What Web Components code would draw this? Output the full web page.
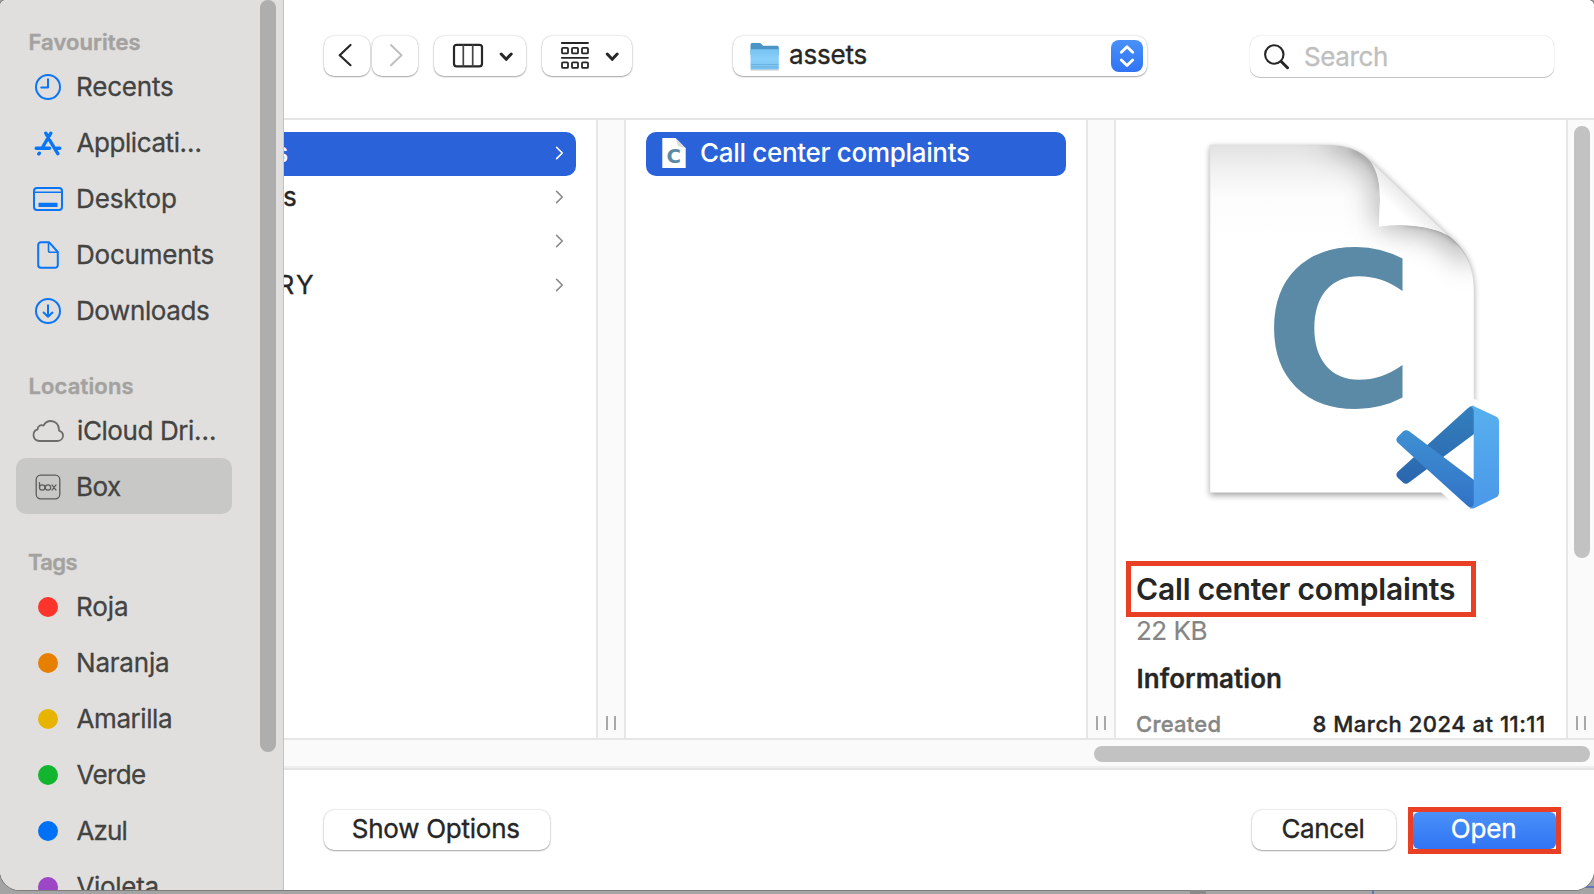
<!DOCTYPE html>
<html lang="en">
<head>
<meta charset="utf-8">
<title>Open</title>
<style>
html,body{margin:0;height:894px;overflow:hidden;font-family:Inter,"Liberation Sans",sans-serif}
body{background:linear-gradient(#6078b8,#6078b8) right 0 bottom 6px/14px 2px no-repeat,#a4a4a4}
</style>
</head>
<body>
<open-dialog></open-dialog>
<script>
const make = (el, css, html) => {
  el.attachShadow({mode:'open'}).innerHTML = `<style>${css}</style>${html}`;
};

/* A run of text whose drawn width is given by the attribute "w". */
const ctx = document.createElement('canvas').getContext('2d');
customElements.define('fit-text', class extends HTMLElement {
  connectedCallback() {
    if (!this.shadowRoot) make(this, ':host{display:inline-block;white-space:pre;flex:none}', '<slot></slot>');
    const s = getComputedStyle(this), t = this.textContent, w = +this.getAttribute('w');
    ctx.font = `${s.fontWeight} ${s.fontSize} ${s.fontFamily}`;
    const m = ctx.measureText(t);
    const ink = m.actualBoundingBoxLeft + m.actualBoundingBoxRight;
    const ls = w && t.length > 1 ? (w - ink) / (t.length - 1) : 0;
    this.style.letterSpacing = ls + 'px';
    this.style.marginLeft = m.actualBoundingBoxLeft - (/^[ATV]/.test(t) ? 1.5 : 0) + 'px';
    this.style.marginRight = (m.actualBoundingBoxRight - m.width - ls) + 'px';
  }
});

customElements.define('side-heading', class extends HTMLElement {
  constructor() {
    super();
    make(this, `:host{display:flex;align-items:flex-end;height:64px;padding-left:29.5px;box-sizing:border-box;
      font:600 22px/27px Inter,sans-serif;color:#a3a2a0;padding-bottom:2px;-webkit-text-stroke:.4px}
      :host([first]){height:58px}`, '<slot></slot>');
  }
});

customElements.define('side-item', class extends HTMLElement {
  constructor() {
    super();
    make(this, `:host{display:flex;align-items:center;height:56px;margin:0 0 0 16px;width:216px;border-radius:10px;
      font:400 26px/32px Inter,sans-serif;color:#434342;-webkit-text-stroke:.3px #434342}
      :host([selected]){background:#c8c8c6}
      .i{width:62px;flex:none;height:34px;display:flex;align-items:center;justify-content:center;padding:2px 0 0 1.500px;box-sizing:border-box}
      .t{padding-top:2px;display:flex}
      .i ::slotted(svg){display:block;flex:none}`,
      '<div class="i"><slot name="icon"></slot></div><div class="t"><slot></slot></div>');
  }
});

customElements.define('tag-dot', class extends HTMLElement {
  constructor() {
    super();
    make(this, ':host{display:block;width:20px;height:20px;border-radius:50%;flex:none}', '');
  }
  connectedCallback() { this.style.background = this.getAttribute('color'); }
});

customElements.define('push-button', class extends HTMLElement {
  constructor() {
    super();
    make(this, `:host{display:flex;align-items:center;height:40px;box-sizing:border-box;border-radius:10px;background:#fff;flex:none;
      box-shadow:0 0 2px rgba(0,0,0,.24),0 1px 1.5px rgba(0,0,0,.3);font:400 26px/32px Inter,sans-serif;color:#262626;-webkit-text-stroke:.35px}
      ::slotted(svg){display:block;flex:none}`, '<slot></slot>');
  }
});

customElements.define('scroll-thumb', class extends HTMLElement {
  constructor() {
    super();
    make(this, ':host{display:block;border-radius:8px;background:#c2c2c2;flex:none}', '');
  }
});

customElements.define('column-divider', class extends HTMLElement {
  constructor() {
    super();
    make(this, `:host{display:flex;box-sizing:border-box;width:30px;flex:none;border:solid #e6e6e6;border-width:0 2px;background:#fafafa;
      align-items:flex-end;justify-content:flex-start;padding-bottom:8px}
      :host([edge]){width:28px;border-right:0;flex-direction:column;justify-content:space-between;align-items:flex-start;padding-top:6px}
      i{width:2px;height:14px;background:#a8a8a8;display:block}
      .g{display:flex;gap:6px;padding-left:8px}
      ::slotted(scroll-thumb){width:16px;height:432px;margin-left:6px}`,
      '<slot></slot><div class="g"><i></i><i></i></div>');
  }
});

customElements.define('file-row', class extends HTMLElement {
  constructor() {
    super();
    make(this, `:host{display:flex;align-items:center;height:44px;box-sizing:border-box;font:400 26px/32px Inter,sans-serif;color:#262626;-webkit-text-stroke:.35px}
      :host([selected]){background:#2962d9;color:#fff}
      .a{margin-left:auto;margin-right:12px;stroke:#8a8a8a;display:none;margin-bottom:2px}
      :host([folder]) .a{display:block}
      :host([selected]) .a{stroke:#fff}
      .l{display:flex;align-items:center;padding-bottom:3px}`,
      `<div class="l"><slot></slot></div><svg class="a" width="9" height="14" viewBox="0 0 9 14" fill="none" stroke-width="1.6" stroke-linecap="round" stroke-linejoin="round"><path d="M1.6 1.4 7.300 7l-5.700 5.600"/></svg>`);
  }
});

customElements.define('mark-box', class extends HTMLElement {
  constructor() {
    super();
    make(this, ':host{display:flex;align-items:center;box-sizing:border-box;border:5px solid #e94025;flex:none}', '<slot></slot>');
  }
});

customElements.define('file-preview', class extends HTMLElement {
  constructor() {
    super();
    make(this, `:host{display:flex;flex-direction:column;width:450px;height:618px;overflow:hidden;background:#fff;flex:none;color:#262626}
      svg{display:block;flex:none}
      mark-box{margin-left:10px;width:350px;height:56px;padding:0 0 0 6px;font:600 30px/36px Inter,sans-serif}
      .size{font:400 26px/32px Inter,sans-serif;color:#858585;margin:-2.5px 0 0 21px;-webkit-text-stroke:.2px}
      .info{font:600 26px/32px Inter,sans-serif;margin:16.5px 0 0 21.5px;-webkit-text-stroke:.3px}
      .row{display:flex;justify-content:space-between;font:500 22px/28px Inter,sans-serif;margin:15px 22px 0 21px;-webkit-text-stroke:.35px}
      .row span{color:#868686}`,
    `<svg width="450" height="441" viewBox="1116 120 450 441">
      <defs>
        <linearGradient id="top" x1="0" y1="0" x2="0" y2="1"><stop offset="0" stop-color="#e2e2e2"/><stop offset=".07" stop-color="#f1f1f1"/><stop offset=".15" stop-color="#fcfcfc"/><stop offset=".3" stop-color="#fff"/></linearGradient>
        <linearGradient id="fold" gradientUnits="userSpaceOnUse" x1="1414" y1="193" x2="1393" y2="216"><stop offset="0" stop-color="#cfcfcf"/><stop offset=".25" stop-color="#ececec"/><stop offset=".8" stop-color="#fff"/></linearGradient>
        <linearGradient id="va" x1="0" y1="0" x2="0" y2="1"><stop offset="0" stop-color="#3380bd"/><stop offset="1" stop-color="#2b66ae"/></linearGradient>
        <linearGradient id="vb" x1="0" y1="0" x2="0" y2="1"><stop offset="0" stop-color="#3f90d2"/><stop offset="1" stop-color="#3172c6"/></linearGradient>
        <linearGradient id="vc" x1="0" y1="0" x2="0" y2="1"><stop offset="0" stop-color="#58b0ee"/><stop offset="1" stop-color="#4b98e9"/></linearGradient>
        <filter id="b3" x="-50%" y="-50%" width="200%" height="200%"><feGaussianBlur stdDeviation="3.2"/></filter>
        <filter id="b9" x="-80%" y="-80%" width="260%" height="260%"><feGaussianBlur stdDeviation="15"/></filter>
        <clipPath id="body"><path d="M1210 145h115C1349 145 1361 151 1371 162 1378 172 1380 184 1380 200L1379 226.500C1404 223 1431 226 1447 235 1467 249 1474 268 1474 290V492.500H1210Z"/></clipPath>
      </defs>
      <path d="M1210 147h115c24 0 36 6 46 15l76 73c20 16 27 34 27 57v203.500h-264z" fill="#000" opacity=".36" filter="url(#b3)"/>
      <path d="M1210 145h115C1349 145 1361 151 1371 162L1447 235C1467 251 1474 268 1474 290V492.500H1210Z" fill="url(#top)" stroke="#ddd" stroke-width=".6"/>
      <g clip-path="url(#body)">
        <path d="M1330 138C1366 143 1386 164 1386 200v20" fill="none" stroke="#000" stroke-opacity=".4" stroke-width="16" filter="url(#b9)"/>
        <path d="M1388 218C1424 214 1456 228 1472 258" fill="none" stroke="#000" stroke-opacity=".5" stroke-width="16" filter="url(#b9)"/>
        <path d="M1352 150C1366 155 1378 166 1382 190" fill="none" stroke="#000" stroke-opacity=".18" stroke-width="5" filter="url(#b3)"/>
        <path d="M1405 222C1427 222 1446 229 1460 242" fill="none" stroke="#000" stroke-opacity=".36" stroke-width="5" filter="url(#b3)"/>
      </g>
      <path d="M1371 162C1378 172 1380 184 1380 200L1379 226.500C1404 223 1431 226 1447 235Z" fill="url(#fold)"/>
      <text transform="translate(1263.800 406) scale(.968 1)" font-family="DejaVu Sans" font-weight="700" font-size="214" fill="#5b8aa6">C</text>
      <path d="M1396.500 440 1406 430.500 1427 445 1471 406 1499 418V493L1474 508 1468 507 1427 469 1406 483.500 1396.500 474 1413 457Z" fill="#fff" stroke="#fff" stroke-width="15" stroke-linejoin="round"/>
      <path d="M1474 406Q1471 405 1467.500 408.500L1397.500 472Q1395 475 1398 478L1403 482.500Q1406 485 1409 482.500L1474 434Z" fill="url(#va)"/>
      <path d="M1397.500 442.500Q1395 439.500 1398 436.500L1403 431.500Q1406 429 1409.500 431.500L1474 480V508Q1470 508.500 1467 505.500Z" fill="url(#vb)"/>
      <path d="M1473.700 434V411Q1473.500 407 1470 406.500 1472 405.500 1474.500 406.500L1496 416.500Q1499 418 1499 421.500V492.500Q1499 496 1496 497.500L1474.500 508Q1472 509 1469.500 508 1473.700 507 1473.700 503Z" fill="url(#vc)"/>
    </svg>
    <mark-box><fit-text w="318">Call center complaints</fit-text></mark-box>
    <div class="size"><fit-text w="69.500">22 KB</fit-text></div>
    <div class="info"><fit-text w="143.500">Information</fit-text></div>
    <div class="row"><span><fit-text w="82.500">Created</fit-text></span><fit-text w="230.500">8 March 2024 at 11:11</fit-text></div>`);
  }
});

customElements.define('finder-sidebar', class extends HTMLElement {
  constructor() {
    super();
    const tag = (n, w, c) => `<side-item><tag-dot slot="icon" color="${c}"></tag-dot><fit-text w="${w}">${n}</fit-text></side-item>`;
    make(this, `:host{display:flex;box-sizing:border-box;width:284px;height:890px;overflow:hidden;background:#e0dfdd;border-right:1px solid #c4c3c2}
      nav{width:260px;flex:none}
      scroll-thumb{width:16px;height:752px;background:#aeaeae}`,
    `<nav>
      <side-heading first><fit-text w="111">Favourites</fit-text></side-heading>
      <side-item><svg slot="icon" width="26" height="26" viewBox="0 0 26 26" fill="none" stroke="#0a75f7" stroke-width="2" stroke-linecap="round" stroke-linejoin="round"><circle cx="13" cy="13" r="12"/><path d="M13 5.300v8.200H6.300"/></svg><fit-text w="95">Recents</fit-text></side-item>
      <side-item><svg slot="icon" width="28" height="26" viewBox="0 0 28 26" fill="none" stroke="#0a75f7" stroke-width="3.400" stroke-linecap="round"><path d="M2.200 18.200H15.500M22.800 18.200H25.800M16.800 3.200 8.200 18M11.800 3.200 13.200 5.600M15.600 10.200 23.800 23.600M5.300 23.200 4.800 23.900"/></svg><fit-text w="124">Applicati…</fit-text></side-item>
      <side-item><svg slot="icon" width="30" height="24" viewBox="0 0 30 24" fill="none" stroke="#0a75f7" stroke-width="2"><rect x="1" y="1" width="28" height="22" rx="3"/><path d="M1 5.300h28" stroke-width="1.500"/><rect x="5.500" y="15.800" width="19" height="4.200" rx=".6" fill="#0a75f7" stroke="none"/></svg><fit-text w="98">Desktop</fit-text></side-item>
      <side-item><svg slot="icon" width="22" height="28" viewBox="0 0 22 28" fill="none" stroke="#0a75f7" stroke-width="2" stroke-linejoin="round"><path d="M12 1.200H4A2.800 2.800 0 0 0 1.200 4v20A2.800 2.800 0 0 0 4 26.800h14a2.800 2.800 0 0 0 2.800-2.800V11z"/><path d="M11.500 1.600v8.200a1.500 1.500 0 0 0 1.500 1.500h7.500" stroke-width="1.600"/></svg><fit-text w="135.500">Documents</fit-text></side-item>
      <side-item><svg slot="icon" width="26" height="26" viewBox="0 0 26 26" fill="none" stroke="#0a75f7" stroke-width="2" stroke-linecap="round" stroke-linejoin="round"><circle cx="13" cy="13" r="12"/><path d="M13 7.200V18.500M8.600 14.500 13 18.800l4.400-4.300"/></svg><fit-text w="131">Downloads</fit-text></side-item>
      <side-heading><fit-text w="104">Locations</fit-text></side-heading>
      <side-item><svg slot="icon" width="32" height="22" viewBox="0 0 32 22" fill="none" stroke="#6c6c6b" stroke-width="1.800" stroke-linejoin="round"><path d="M7 21a6 6 0 0 1-1.300-11.700C5.600 6 8.800 4.500 11.500 5.600 13.200 2.500 15.800 1 18.700 1c4.700 0 8.300 3.600 8.300 8.600v1C29.600 11.400 31 13.300 31 15.600 31 18.700 28.600 21 25.500 21z"/></svg><fit-text w="137">iCloud Dri…</fit-text></side-item>
      <side-item selected><svg slot="icon" width="26" height="26" viewBox="0 0 26 26" fill="none" stroke="#5c5c5b"><rect x="1.200" y="1.200" width="23.600" height="23.600" rx="4.500" stroke-width="1.300"/><g stroke-width="1.200" stroke-linecap="round"><path d="M4.500 8.600v5.200"/><circle cx="7.200" cy="13.500" r="2.700"/><circle cx="13" cy="13.500" r="2.700"/><path d="M17 10.900l4 5.200M21 10.900l-4 5.200"/></g></svg><fit-text w="43">Box</fit-text></side-item>
      <side-heading><fit-text w="49.500">Tags</fit-text></side-heading>
      ${tag('Roja',49,'#fb352b')}${tag('Naranja',90,'#e77f02')}${tag('Amarilla',94.5,'#e7b401')}${tag('Verde',68.500,'#12b52d')}${tag('Azul',50,'#0070f5')}${tag('Violeta',81,'#9d47c7')}
    </nav><scroll-thumb></scroll-thumb>`);
  }
});

customElements.define('finder-toolbar', class extends HTMLElement {
  constructor() {
    super();
    make(this, `:host{display:flex;align-items:flex-start;box-sizing:border-box;height:120px;padding:36px 0 0 40px;border-bottom:2px solid #e5e5e5;background:#fff}
      push-button svg{margin:auto}
      .step{width:32px;height:32px;border-radius:8px;background:linear-gradient(#4a90f8,#3074f5);margin-left:auto;margin-right:4px;display:flex}
      .search{height:41px;border-radius:10px;box-shadow:0 0 1.500px rgba(0,0,0,.22),0 1px 0 rgba(0,0,0,.2);width:304px;margin-left:103px;color:#bfbfbf}`,
    `<push-button style="width:46px"><svg width="46" height="40" viewBox="0 0 46 40" fill="none" stroke="#262626" stroke-width="2.200" stroke-linecap="round" stroke-linejoin="round"><path d="M26.500 9 15.700 19.200 26.500 29.200"/></svg></push-button>
    <push-button style="width:46px;margin-left:2px"><svg width="46" height="40" viewBox="0 0 46 40" fill="none" stroke="#bfbfbf" stroke-width="2" stroke-linecap="round" stroke-linejoin="round"><path d="M19 9 29.500 19.200 19 29.200"/></svg></push-button>
    <push-button style="width:92px;margin-left:16px"><svg width="92" height="40" viewBox="0 0 92 40" fill="none" stroke="#262626" stroke-width="2.200" stroke-linecap="round" stroke-linejoin="round"><rect x="20" y="8.800" width="28" height="21.500" rx="2.500"/><path d="M29.300 9v21M38.700 9v21" stroke-width="1.700" stroke="#444"/><path d="M67.200 18 72.200 23.300 77.200 18" stroke-width="3"/></svg></push-button>
    <push-button style="width:90px;margin-left:16px"><svg width="90" height="40" viewBox="0 0 90 40" fill="none" stroke="#262626" stroke-width="1.800" stroke-linecap="round" stroke-linejoin="round"><path d="M19.800 7H46M19.800 21.800H46"/><g><rect x="20" y="11.800" width="6" height="5.600" rx="1"/><rect x="30" y="11.800" width="6" height="5.600" rx="1"/><rect x="40" y="11.800" width="6" height="5.600" rx="1"/><rect x="20" y="26.300" width="6" height="5.600" rx="1"/><rect x="30" y="26.300" width="6" height="5.600" rx="1"/><rect x="40" y="26.300" width="6" height="5.600" rx="1"/></g><path d="M65.200 18 70.200 23.300 75.200 18" stroke-width="3"/></svg></push-button>
    <push-button style="width:414px;margin-left:101px"><svg style="margin:0 10px 0 17px" width="30" height="30" viewBox="0 0 30 30"><defs><linearGradient id="f" x1="0" y1="0" x2="0" y2="1"><stop offset="0" stop-color="#78c3f2"/><stop offset=".5" stop-color="#89cffa"/><stop offset="1" stop-color="#79c2ef"/></linearGradient></defs><path d="M.5 28.500h28.500v.900H.5z" fill="#888" opacity=".6"/><path d="M.5 4Q.5 2 2 2H9.500Q10.500 2 11.500 3L13 4.700H27.500Q28.800 4.700 28.800 6.400V14H.5Z" fill="#4a94c6"/><path d="M.5 8.200H28.800V27.500Q28.800 28.500 27.800 28.500H1.500Q.5 28.500 .5 27.500Z" fill="url(#f)"/><path d="M1 23.500H28.500M1 26H28.500" stroke="#62a9d8" stroke-width=".7"/></svg><fit-text w="76.500" style="position:relative;top:-1px">assets</fit-text>
      <div class="step"><svg width="32" height="32" viewBox="0 0 32 32" fill="none" stroke="#fff" stroke-width="2.800" stroke-linecap="round" stroke-linejoin="round"><path d="M10.300 12.300 16 6.800 21.700 12.300M10.300 20 16 25.500 21.700 20"/></svg></div></push-button>
    <push-button class="search"><svg style="margin:0 16px 0 14px" width="25" height="26" viewBox="0 0 25 26" fill="none" stroke="#262626" stroke-linecap="round"><circle cx="10.300" cy="10.500" r="9.200" stroke-width="2.100"/><path d="M17.200 17.500 23.500 23.700" stroke-width="3"/></svg><fit-text w="82">Search</fit-text></push-button>`);
  }
});

customElements.define('column-browser', class extends HTMLElement {
  constructor() {
    super();
    make(this, `:host{display:block;background:#fff}
      .cols{display:flex;height:618px}
      .c1{width:312px;overflow:hidden;padding-top:12px;box-sizing:border-box;flex:none}
      .c1 file-row{margin-right:20px}
      .c1 file-row[selected]{border-radius:0 10px 10px 0}
      .c2{width:460px;flex:none;padding:12px 20px 0;box-sizing:border-box}
      .c2 file-row{border-radius:10px;padding-left:16px;font-weight:500;-webkit-text-stroke:0}
      .c2 svg{margin-right:15px;display:block}
      .bar{height:32px;box-sizing:border-box;border-top:2px solid #e6e6e6;border-bottom:2px solid #e4e4e4;background:#fafafa;box-shadow:inset 0 -2px #eee;padding:6px 4px 0 0;display:flex;justify-content:flex-end}
      .bar scroll-thumb{width:496px;height:16px}`,
    `<div class="cols">
      <div class="c1">
        <file-row folder selected><fit-text style="position:relative;left:-8.500px">s</fit-text></file-row>
        <file-row folder><fit-text>s</fit-text></file-row>
        <file-row folder></file-row>
        <file-row folder><fit-text w="33.500" style="position:relative;left:-4.500px">RY</fit-text></file-row>
      </div>
      <column-divider></column-divider>
      <div class="c2"><file-row selected><svg width="24" height="30" viewBox="0 0 24 30"><path d="M.3 0H13.500L23.700 10.200V30H.3Z" fill="#fff"/><path d="M13.500 0 23.700 10.200 16 8Z" fill="#dcdcdc"/><text x="4.600" y="25" font-family="DejaVu Sans" font-weight="700" font-size="19.500" fill="#5b8aa6" textLength="14.500" lengthAdjust="spacingAndGlyphs" stroke="none">C</text></svg><fit-text w="268">Call center complaints</fit-text></file-row></div>
      <column-divider></column-divider>
      <file-preview></file-preview>
      <column-divider edge><scroll-thumb></scroll-thumb></column-divider>
    </div>
    <div class="bar"><scroll-thumb></scroll-thumb></div>`);
  }
});

customElements.define('dialog-footer', class extends HTMLElement {
  constructor() {
    super();
    make(this, `:host{display:flex;align-items:center;height:120px;box-sizing:border-box;padding:0 33px 0 40px;background:#fff}
      push-button{justify-content:center;padding:0 2px 3px 0}
      mark-box{width:153px;height:47px;margin-left:12px;background:#fff;position:relative;top:.5px}
      .open{width:143px;height:37px;border-radius:6px;box-shadow:none;color:#fff;background:linear-gradient(#4a90f8,#3074f5)}`,
    `<push-button style="width:226px"><fit-text w="166.500">Show Options</fit-text></push-button>
     <push-button style="width:144px;margin-left:auto"><fit-text w="81">Cancel</fit-text></push-button>
     <mark-box><push-button class="open"><fit-text w="63.500">Open</fit-text></push-button></mark-box>`);
  }
});

customElements.define('open-dialog', class extends HTMLElement {
  constructor() {
    super();
    make(this, `:host{display:block;width:1594px;height:894px;overflow:hidden}
      .win{display:grid;grid-template-columns:284px 1310px;height:890px;border-radius:6px 6px 20px 20px;overflow:hidden;background:#fff;box-shadow:0 0 0 1px #7d7d7d}
      .under{height:4px;display:flex}
      .under i{display:block}`,
    `<div class="win"><finder-sidebar></finder-sidebar>
      <main><finder-toolbar></finder-toolbar><column-browser></column-browser><dialog-footer></dialog-footer></main></div>
     <div class="under"><i style="width:1190px"></i><i style="width:16px;background:#8a8a8a"></i><i style="width:166px"></i><i style="width:2px;background:#5f75b5"></i></div>`);
  }
});
</script>
</body>
</html>
